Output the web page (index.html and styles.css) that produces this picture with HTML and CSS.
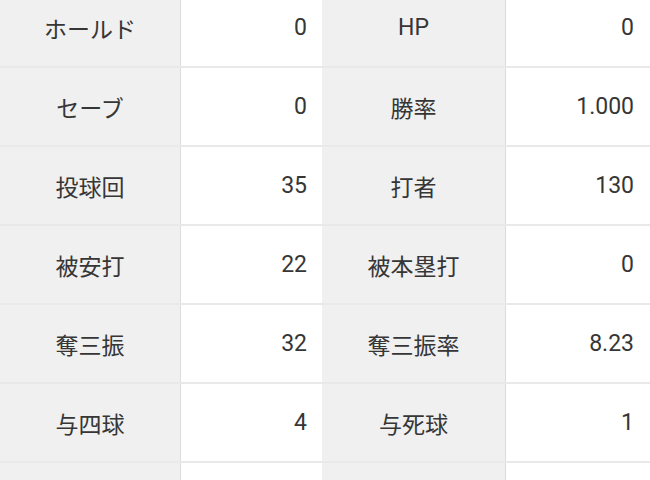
FILE: index.html
```html
<!DOCTYPE html>
<html lang="ja">
<head>
<meta charset="utf-8">
<link rel="stylesheet" href="styles.css">
</head>
<body>
<div class="viewport">
<div class="stats">
  <div class="row"><div class="label l1">ホールド</div><div class="value v1">0</div><div class="label l2">HP</div><div class="value v2">0</div></div>
  <div class="row"><div class="label l1">セーブ</div><div class="value v1">0</div><div class="label l2">勝率</div><div class="value v2">1.000</div></div>
  <div class="row"><div class="label l1">投球回</div><div class="value v1">35</div><div class="label l2">打者</div><div class="value v2">130</div></div>
  <div class="row"><div class="label l1">被安打</div><div class="value v1">22</div><div class="label l2">被本塁打</div><div class="value v2">0</div></div>
  <div class="row"><div class="label l1">奪三振</div><div class="value v1">32</div><div class="label l2">奪三振率</div><div class="value v2">8.23</div></div>
  <div class="row"><div class="label l1">与四球</div><div class="value v1">4</div><div class="label l2">与死球</div><div class="value v2">1</div></div>
  <div class="row"><div class="label l1"></div><div class="value v1"></div><div class="label l2"></div><div class="value v2"></div></div>
</div>
</div>
</body>
</html>
```
FILE: styles.css
```css
html, body {
  margin: 0;
  padding: 0;
  background: #ffffff;
}
body {
  font-family: Roboto, "Noto Sans CJK JP", sans-serif;
  color: #363636;
  font-size: 23px;
}
.viewport {
  height: 480px;
  overflow: hidden;
}
.stats {
  margin-top: -11px;
}
.row {
  display: grid;
  grid-template-columns: 181px 141px 184px 144px;
  height: 77px;
  border-bottom: 2px solid #e9e9e9;
}
.label {
  background: #f0f0f0;
  display: flex;
  align-items: center;
  justify-content: center;
  border-right: 1px solid #dcdcdc;
}
.l1 { width: 180px; }
.l2 { width: 183px; }
.value {
  display: flex;
  align-items: center;
  justify-content: flex-end;
  padding-right: 15px;
  background: #ffffff;
}
.v2 { padding-right: 16px; }
```
